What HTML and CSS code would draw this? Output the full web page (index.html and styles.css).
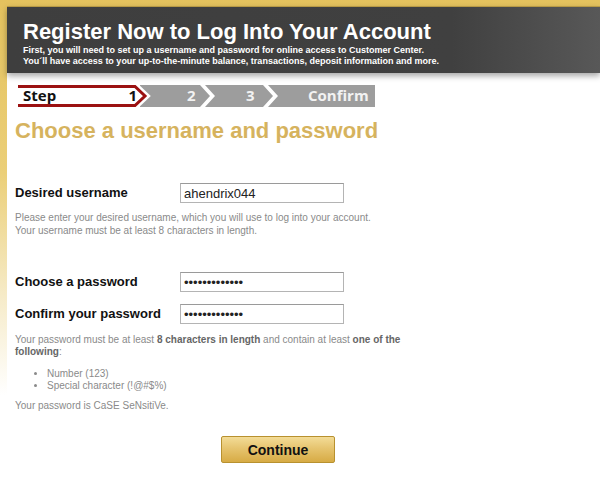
FILE: index.html
```html
<!DOCTYPE html>
<html lang="en">
<head>
  <meta charset="UTF-8">
  <meta name="viewport" content="width=device-width, initial-scale=1.0">
  <title>Register Now</title>
  <link rel="stylesheet" href="styles.css">
</head>
<body>
  <div class="frame">
    <div class="main">
      <div class="header">
        <h1>Register Now to Log Into Your Account</h1>
        <p>First, you will need to set up a username and password for online access to Customer Center.<br>
        You&acute;ll have access to your up-to-the-minute balance, transactions, deposit information and more.</p>
      </div>

      <div class="content">
        <svg class="steps" width="360" height="22" viewBox="0 0 360 22">
          <rect x="122" y="0" width="235" height="22" fill="#9d9d9d"/>
          <polygon points="-3,1.5 117,1.5 127,11 117,20.5 -3,20.5" fill="#fff" stroke="#fff" stroke-width="8"/>
          <polygon points="-3,1.5 117,1.5 127,11 117,20.5 -3,20.5" fill="#fff" stroke="#9b1111" stroke-width="3"/>
          <polygon points="182,0 187,0 197,11 187,22 182,22 192,11" fill="#fff"/>
          <polygon points="245,0 250,0 260,11 250,22 245,22 255,11" fill="#fff"/>
          <text x="5" y="16" class="step-on">Step</text>
          <text x="119" y="16" class="step-on" text-anchor="end">1</text>
          <text x="169" y="16" class="step-off">2</text>
          <text x="228" y="16" class="step-off">3</text>
          <text x="290" y="16" class="step-off">Confirm</text>
        </svg>

        <h2>Choose a username and password</h2>

        <form id="registerForm">
          <div class="row first">
            <label for="username">Desired username</label>
            <input type="text" id="username" value="ahendrix044">
          </div>
          <p class="help">Please enter your desired username, which you will use to log into your account.<br>
          Your username must be at least 8 characters in length.</p>

          <div class="row pass">
            <label for="password">Choose a password</label>
            <input type="password" id="password" value="abcdefghijklm">
          </div>
          <div class="row">
            <label for="confirm">Confirm your password</label>
            <input type="password" id="confirm" value="abcdefghijklm">
          </div>

          <p class="help rules">Your password must be at least <b>8 characters in length</b> and contain at least <b>one of the following</b>:</p>
          <ul class="help">
            <li>Number (123)</li>
            <li>Special character (!@#$%)</li>
          </ul>
          <p class="help case">Your password is CaSE SeNsitiVe.</p>

          <button type="submit">Continue</button>
        </form>
      </div>
    </div>
  </div>
</body>
</html>
```

FILE: styles.css
```css
body {
  margin: 0;
  font-family: "Liberation Sans", Arial, sans-serif;
  background-color: #fff;
}
.frame {
  padding: 7px 0 0 7px;
  min-height: 487px;
  background: linear-gradient(to bottom, #e4c25e 0, #ebcf78 35%, #f6ebc8 60%, #fff 80%);
}
.main {
  background-color: #fff;
  min-height: 487px;
}
.header {
  height: 53px;
  padding: 13px 0 0 16px;
  background: linear-gradient(to right, #3e3e3e 0, #404040 75%, #585858 100%);
  box-shadow: 0 3px 6px rgba(0, 0, 0, 0.35);
  border-top: 1px solid #b89a45;
  margin-top: -1px;
}
.header h1 {
  margin: 0;
  font-size: 22px;
  line-height: 24px;
  color: #fff;
}
.header p {
  margin: 1px 0 0;
  font-size: 9px;
  line-height: 11px;
  font-weight: bold;
  color: #fff;
}
.content {
  padding: 12px 0 0 8px;
}
.steps {
  display: block;
  margin-left: 3px;
}
.steps text {
  font-family: "Open Sans", sans-serif;
  font-weight: bold;
  font-size: 15px;
}
.step-on {
  fill: #111;
}
.step-off {
  fill: #f2f2f2;
}
h2 {
  margin: 11px 0 0;
  font-size: 22px;
  line-height: 26px;
  color: #d6b35e;
}
.row {
  display: flex;
  align-items: center;
  margin-top: 12px;
}
.row.first {
  margin-top: 39px;
}
.row.pass {
  margin-top: 35px;
}
label {
  width: 165px;
  font-size: 13px;
  line-height: 16px;
  font-weight: bold;
  color: #111;
}
input {
  box-sizing: border-box;
  width: 164px;
  height: 20px;
  padding: 0 3px;
  border: 1px solid #b4b4b4;
  border-top-color: #9a9a9a;
  font-family: "Liberation Sans", Arial, sans-serif;
  font-size: 13px;
  color: #222;
}
.help {
  margin: 8px 0 0;
  font-size: 10px;
  line-height: 13px;
  color: #8a8a8a;
}
.help b {
  color: #666;
}
.rules {
  width: 395px;
  margin-top: 10px;
  line-height: 12px;
}
ul.help {
  margin-top: 10px;
  padding-left: 32px;
  line-height: 12px;
}
.case {
  line-height: 12px;
}
button {
  display: block;
  width: 114px;
  height: 27px;
  margin: 24px 0 0 206px;
  padding: 0;
  border: 1px solid #b8912f;
  border-radius: 2px;
  background: linear-gradient(to bottom, #f3dc97 0, #e6c46f 45%, #d7ab45 100%);
  font-family: "Liberation Sans", Arial, sans-serif;
  font-size: 14px;
  font-weight: bold;
  color: #111;
  cursor: pointer;
}
```
